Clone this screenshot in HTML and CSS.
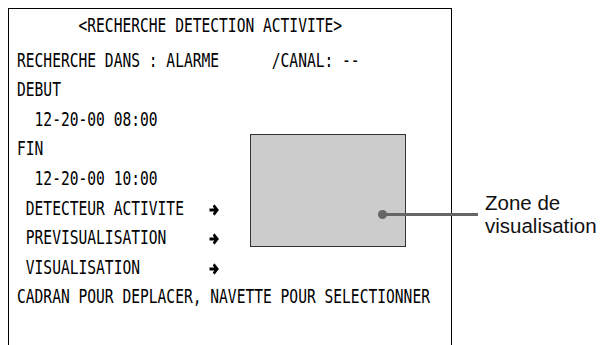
FILE: index.html
```html
<!DOCTYPE html>
<html lang="fr">
<head>
  <meta charset="UTF-8">
  <title>Recherche detection activite</title>
  <link rel="stylesheet" href="styles.css">
</head>
<body>
  <div class="figure">
    <div class="screen">
      <div class="line title">       &lt;RECHERCHE DETECTION ACTIVITE&gt;</div>
      <div class="line">RECHERCHE DANS : ALARME      /CANAL: --</div>
      <div class="line">DEBUT</div>
      <div class="line">  12-20-00 08:00</div>
      <div class="line">FIN</div>
      <div class="line">  12-20-00 10:00</div>
      <div class="line"> DETECTEUR ACTIVITE   <svg class="arrow" viewBox="0 0 10 9"><path d="M0.5 4.5H8.2M4.6 1L8.2 4.5L4.6 8"/></svg></div>
      <div class="line"> PREVISUALISATION     <svg class="arrow" viewBox="0 0 10 9"><path d="M0.5 4.5H8.2M4.6 1L8.2 4.5L4.6 8"/></svg></div>
      <div class="line"> VISUALISATION        <svg class="arrow" viewBox="0 0 10 9"><path d="M0.5 4.5H8.2M4.6 1L8.2 4.5L4.6 8"/></svg></div>
      <div class="line">CADRAN POUR DEPLACER, NAVETTE POUR SELECTIONNER</div>

      <!-- zone de previsualisation sur l'ecran -->
      <div class="preview"></div>
    </div>

    <div class="callout">
      <span class="dot"></span>
      <span class="leader"></span>
      <div class="label">Zone de<br>visualisation</div>
    </div>
  </div>
</body>
</html>
```

FILE: styles.css
```css
body {
  margin: 0;
  background-color: #ffffff;
  color: #000000;
  overflow: hidden;
}
.figure {
  position: relative;
  width: 602px;
  height: 345px;
}
.screen {
  position: relative;
  margin: 8px 0 0 8px;
  width: 434px;
  height: 360px;
  padding: 1px 0 0 8px;
  border: 1px solid #000;
  font-family: "DejaVu Sans Mono", monospace;
  font-size: 14.6px;
}
.line {
  height: 29.6px;
  line-height: 29.6px;
  white-space: pre;
  transform: scaleY(1.3);
}
.title {
  margin-bottom: 5px;
}
.arrow {
  width: 10px;
  height: 9px;
  margin-left: -1px;
  vertical-align: -1px;
  fill: none;
  stroke: #000;
  stroke-width: 2.4;
}
.preview {
  position: absolute;
  left: 241px;
  top: 125px;
  width: 154px;
  height: 111px;
  background-color: #cccccc;
  border: 1px solid #333;
}
.callout {
  position: absolute;
  left: 378px;
  top: 183px;
  display: flex;
  align-items: center;
}
.dot {
  width: 9px;
  height: 9px;
  border-radius: 50%;
  background-color: #666;
}
.leader {
  width: 92px;
  height: 3px;
  margin-left: -1px;
  background-color: #666;
}
.label {
  margin-left: 7px;
  font-family: "Liberation Sans", Arial, sans-serif;
  font-size: 20.5px;
  line-height: 23px;
  color: #111;
}
```
